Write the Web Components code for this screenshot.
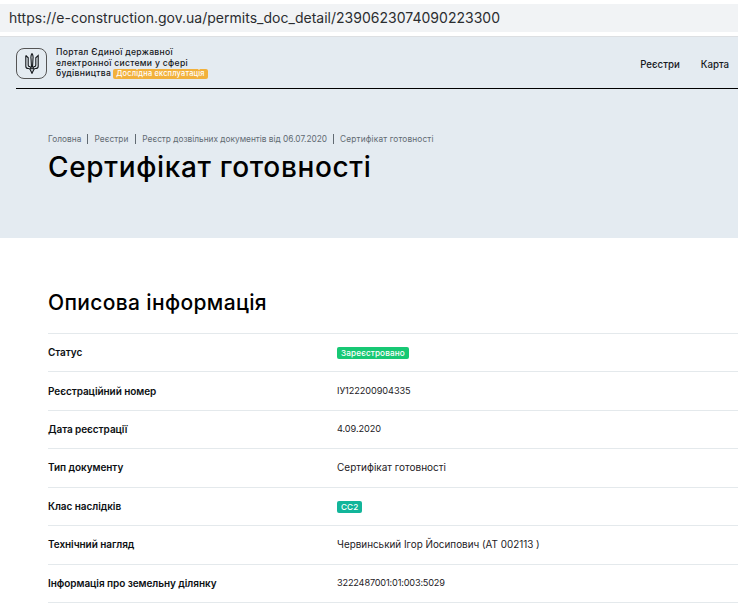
<!DOCTYPE html>
<html lang="uk"><head><meta charset="utf-8">
<style>
html,body{margin:0;padding:0;background:#fff;overflow:hidden;width:738px;height:611px}
body{font-family:Inter,"Liberation Sans",sans-serif;color:#000}
h1{margin:6px 0 0 48px;font:500 28px/32px Inter,sans-serif;letter-spacing:.65px;color:#000}
</style></head><body>
<url-bar>https://e-construction.gov.ua/permits_doc_detail/2390623074090223300</url-bar>
<site-hero>
  <site-header></site-header>
  <bread-crumbs><span>Головна</span><span>Реєстри</span><span>Реєстр дозвільних документів від 06.07.2020</span><span>Сертифікат готовності</span></bread-crumbs>
  <h1>Сертифікат готовності</h1>
</site-hero>
<info-section heading="Описова інформація">
  <info-row label="Статус"><status-tag color="#17c874">Зареєстровано</status-tag></info-row>
  <info-row label="Реєстраційний номер" style="--fs:9.2px;--ls:-.08px">ІУ122200904335</info-row>
  <info-row label="Дата реєстрації" style="--fs:9.2px;--ls:-.1px">4.09.2020</info-row>
  <info-row label="Тип документу" style="--fs:10px">Сертифікат готовності</info-row>
  <info-row label="Клас наслідків"><status-tag color="#12b59a">СС2</status-tag></info-row>
  <info-row label="Технічний нагляд">Червинський Ігор Йосипович (АТ 002113 )</info-row>
  <info-row label="Інформація про земельну ділянку" style="--fs:9.2px;--ls:-.18px">3222487001:01:003:5029</info-row>
</info-section>
<script>
function def(name, html, init){
  customElements.define(name, class extends HTMLElement{
    constructor(){super();this.attachShadow({mode:'open'}).innerHTML=html;}
    connectedCallback(){ if(init) init(this); }
  });
}
def('url-bar',`<style>:host{display:flex;align-items:center;box-sizing:border-box;height:28px;margin:4px 0 4px;padding-left:9px;background:#f1f3f5;color:#2b2d30;font:400 14px/28px Inter,sans-serif;letter-spacing:.015px;white-space:nowrap}</style><slot></slot>`);
def('site-hero',`<style>:host{display:block;height:202px;box-sizing:border-box;background:#e4ebf1;border-top:1px solid #dcdfe2}</style><slot></slot>`);
def('site-header',`<style>:host{display:flex;align-items:center;box-sizing:border-box;height:52px;margin-left:16px;border-bottom:1px solid #000;overflow:hidden;padding-top:1px;margin-bottom:42px}
.logo{flex:none;width:31px;height:31px;border:1px solid #555;border-radius:8px;display:flex;align-items:center;justify-content:center;box-sizing:border-box}
.t{margin-left:9px;font:500 8.6px/10.5px Inter,sans-serif;color:#15181c;letter-spacing:.3px;width:190px}
.b{display:inline-block;background:#f2b13c;color:#fff;font:500 7.4px/10px Inter,sans-serif;padding:0 3px;border-radius:2px;margin-left:2px;letter-spacing:.2px}
nav{margin-left:auto;display:flex;gap:21px;padding-right:9px;padding-top:3px;font:500 9.7px/12px Inter,sans-serif;color:#15181c}</style>
<div class="logo"><svg width="14" height="21" viewBox="0 0 14 21" fill="none" stroke="#14181c" stroke-width="1.1"><path d="M7 .6C6 2 5.700 3.500 6 5.500L6.500 14h1L8 5.500C8.300 3.500 8 2 7 .6z"/><path d="M.8 2.500v10.700c0 1.500 1 2.300 2.700 2.300.9 0 1.500.4 1.800 1.200L7 20.300l1.700-3.600c.3-.8.900-1.200 1.800-1.200 1.700 0 2.700-.8 2.700-2.300V2.500L10.800 4.800v7.200c0 1.100-.8 1.800-1.900 1.500M.8 2.500l2.400 2.300v7.200c0 1.100.8 1.800 1.900 1.500"/><path d="M4.800 15.800h4.400M5.400 13.500c.3.800.5 1.500.5 2.300M8.600 13.500c-.3.800-.5 1.500-.5 2.300"/></svg></div>
<div class="t">Портал Єдиної державної<br>електронної системи у сфері<br>будівництва<span class="b">Дослідна експлуатація</span></div>
<nav><span>Реєстри</span><span>Карта</span></nav>`);
def('bread-crumbs',`<style>:host{display:block;margin:0 0 0 48px;height:14px;font:400 8.3px/14px Inter,sans-serif;color:#616a72;white-space:nowrap;letter-spacing:.05px}
.w{display:flex}</style><div class="w"><slot></slot></div>`, el=>{
  const ls=['.05px','.05px','0','.15px'], ml=[0,6,7,6];
  [...el.children].forEach((c,i)=>{ c.style.cssText='display:inline-block;line-height:10px;margin-top:3px;height:10px;letter-spacing:'+ls[i]+(i>0?';border-left:1px solid #616a72;padding-left:6px;margin-left:'+ml[i]+'px':''); });
});
def('info-section',`<style>:host{display:block;padding:0 0 0 48px}
h2{margin:0;font:500 21px/26px Inter,sans-serif;letter-spacing:.35px;color:#000;padding-top:52px;padding-bottom:17px}
.rows{border-top:1px solid #e4e9ec}</style><h2 id="h"></h2><div class="rows"><slot></slot></div>`,el=>{el.shadowRoot.getElementById('h').textContent=el.getAttribute('heading');});
def('info-row',`<style>:host{display:flex;align-items:center;box-sizing:border-box;height:38.43px;padding-bottom:1px;border-bottom:1px solid #e4e9ec;font:400 var(--fs,9.9px)/12px Inter,sans-serif;color:#1d2125}
.l{flex:none;width:289px;font-size:10px;font-weight:600;color:#0c0f12;letter-spacing:-.06px}
.v{letter-spacing:var(--ls,0)}</style><div class="l" id="l"></div><div class="v"><slot></slot></div>`,el=>{el.shadowRoot.getElementById('l').textContent=el.getAttribute('label');});
def('status-tag',`<style>:host{display:inline-block;vertical-align:middle;border-radius:2px;padding:0 4px;font:500 8.2px/12px Inter,sans-serif;color:#fff;letter-spacing:.12px}</style><slot></slot>`,el=>{el.style.background=el.getAttribute('color');});
</script>
</body></html>
